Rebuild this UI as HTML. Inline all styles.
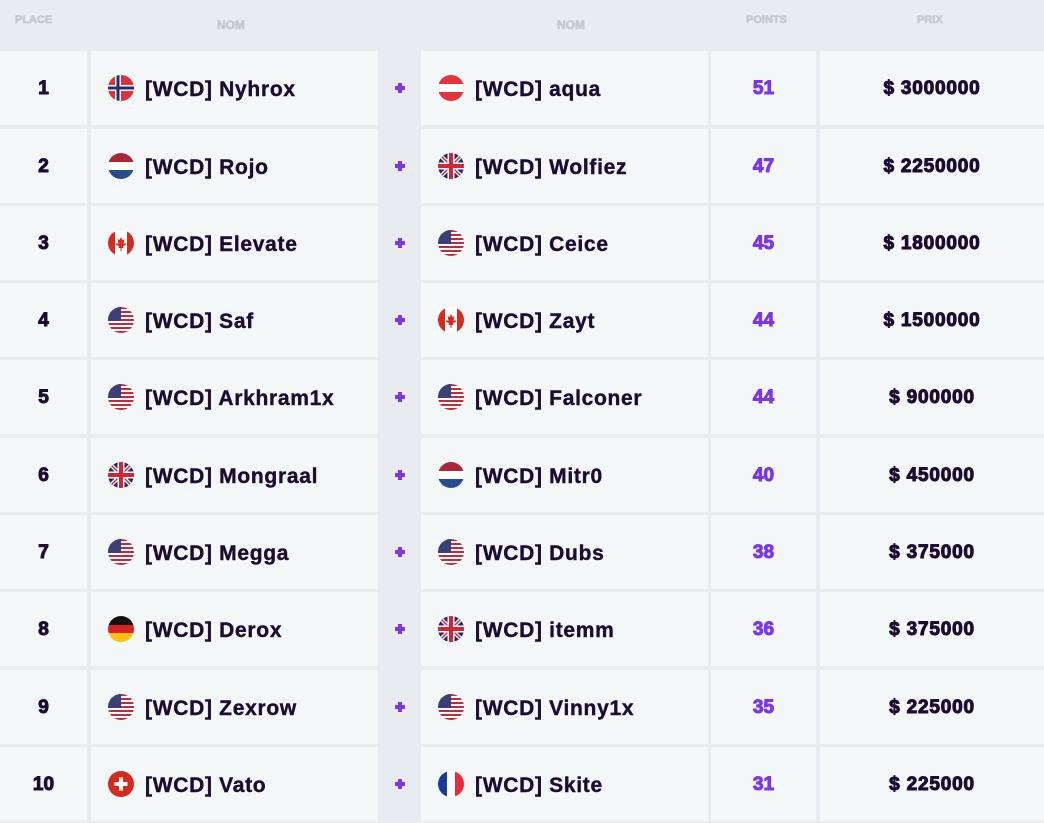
<!DOCTYPE html>
<html><head><meta charset="utf-8"><style>
*{margin:0;padding:0;box-sizing:border-box}
body{width:1044px;height:823px;background:#e8ecf0;position:relative;overflow:hidden;font-family:"Liberation Sans",sans-serif;color:#1c0b33}
.h{position:absolute;top:14px;font-size:11px;font-weight:700;color:#c4c8cf;-webkit-text-stroke:.6px #c4c8cf}
.r{position:absolute;left:0;width:1044px;height:74px}
.c{position:absolute;top:0;height:74px;background:#f3f7f8;display:flex;align-items:center}
.p{left:0;width:87px;justify-content:center;font-weight:700;font-size:19px;-webkit-text-stroke:1px #1c0b33;padding-top:2px}
.n{width:287px;padding-left:17px;font-weight:700;font-size:21px;letter-spacing:.7px;-webkit-text-stroke:.4px #1c0b33;padding-top:3px}
.n1{left:91px}.n2{left:421px}
.n svg{width:26px;height:26px;margin-right:11px;flex:none;margin-top:-3px}
.pt{left:711px;width:105px;justify-content:center;color:#7b35f0;font-weight:700;font-size:19px;-webkit-text-stroke:1px #7b35f0;padding-top:2px}
.pr{left:820px;width:224px;justify-content:center;font-weight:700;font-size:19px;letter-spacing:.8px;-webkit-text-stroke:1px #1c0b33;padding-top:2px}
.pl{position:absolute;left:393px;top:30px;width:14px;height:14px}
</style></head><body>
<svg width="0" height="0" style="position:absolute">
<defs>
<clipPath id="cc"><circle cx="13" cy="13" r="13"/></clipPath>
<g id="no" clip-path="url(#cc)"><rect width="26" height="26" fill="#e0303c"/><rect x="7" width="6" height="26" fill="#fff"/><rect y="10" width="26" height="6" fill="#fff"/><rect x="8.5" width="3" height="26" fill="#1e2f6b"/><rect y="11.5" width="26" height="3" fill="#1e2f6b"/></g>
<g id="at" clip-path="url(#cc)"><rect width="26" height="26" fill="#e5333d"/><rect y="9" width="26" height="8" fill="#fff"/></g>
<g id="nl" clip-path="url(#cc)"><rect width="26" height="9" fill="#ad2636"/><rect y="9" width="26" height="8" fill="#fff"/><rect y="17" width="26" height="9" fill="#274c8f"/></g>
<g id="gb" clip-path="url(#cc)"><rect width="26" height="26" fill="#1f2a66"/><path d="M0 0L26 26M26 0L0 26" stroke="#fff" stroke-width="4"/><path d="M0 0L26 26M26 0L0 26" stroke="#d42434" stroke-width="1.5"/><rect x="9.5" width="7" height="26" fill="#fff"/><rect y="9.5" width="26" height="7" fill="#fff"/><rect x="11" width="4" height="26" fill="#d42434"/><rect y="11" width="26" height="4" fill="#d42434"/></g>
<g id="ca" clip-path="url(#cc)"><rect width="26" height="26" fill="#fff"/><rect width="7" height="26" fill="#d52b1e"/><rect x="19" width="7" height="26" fill="#d52b1e"/><path d="M13 7l1.5 3 2-1-1 5 2-1 .5 2-3 1 .5 2h-2v3h-1v-3h-2l.5-2-3-1 .5-2 2 1-1-5 2 1z" fill="#d52b1e"/></g>
<g id="us" clip-path="url(#cc)"><rect width="26" height="26" fill="#fff"/><g fill="#c42a3a"><rect y="0" width="26" height="2"/><rect y="4" width="26" height="2"/><rect y="8" width="26" height="2"/><rect y="12" width="26" height="2"/><rect y="16" width="26" height="2"/><rect y="20" width="26" height="2"/><rect y="24" width="26" height="2"/></g><rect width="13" height="14" fill="#3b3f78"/></g>
<g id="de" clip-path="url(#cc)"><rect width="26" height="9" fill="#111"/><rect y="9" width="26" height="8" fill="#dd1f26"/><rect y="17" width="26" height="9" fill="#fcc10d"/></g>
<g id="ch" clip-path="url(#cc)"><rect width="26" height="26" fill="#d52b1e"/><rect x="11" y="6.5" width="4" height="13" fill="#fff"/><rect x="6.5" y="11" width="13" height="4" fill="#fff"/></g>
<g id="fr" clip-path="url(#cc)"><rect width="9" height="26" fill="#1c3a9c"/><rect x="9" width="8" height="26" fill="#fff"/><rect x="17" width="9" height="26" fill="#ee2a3c"/></g>
<g id="plus"><path d="M5 2h4v3h3v4h-3v3h-4v-3h-3v-4h3z" fill="#7b35f0"/></g>
</defs></svg>
<div class="h" style="left:15px">PLACE</div>
<div class="h" style="left:217px;top:18px;font-size:12px">NOM</div>
<div class="h" style="left:557px;top:18px;font-size:12px">NOM</div>
<div class="h" style="left:746px">POINTS</div>
<div class="h" style="left:917px">PRIX</div>

<div class="r" style="top:51px"><div class="c p">1</div><div class="c n n1"><svg><use href="#no"/></svg>[WCD] Nyhrox</div><svg class="pl"><use href="#plus"/></svg><div class="c n n2"><svg><use href="#at"/></svg>[WCD] aqua</div><div class="c pt">51</div><div class="c pr">$ 3000000</div></div>
<div class="r" style="top:129px"><div class="c p">2</div><div class="c n n1"><svg><use href="#nl"/></svg>[WCD] Rojo</div><svg class="pl"><use href="#plus"/></svg><div class="c n n2"><svg><use href="#gb"/></svg>[WCD] Wolfiez</div><div class="c pt">47</div><div class="c pr">$ 2250000</div></div>
<div class="r" style="top:206px"><div class="c p">3</div><div class="c n n1"><svg><use href="#ca"/></svg>[WCD] Elevate</div><svg class="pl"><use href="#plus"/></svg><div class="c n n2"><svg><use href="#us"/></svg>[WCD] Ceice</div><div class="c pt">45</div><div class="c pr">$ 1800000</div></div>
<div class="r" style="top:283px"><div class="c p">4</div><div class="c n n1"><svg><use href="#us"/></svg>[WCD] Saf</div><svg class="pl"><use href="#plus"/></svg><div class="c n n2"><svg><use href="#ca"/></svg>[WCD] Zayt</div><div class="c pt">44</div><div class="c pr">$ 1500000</div></div>
<div class="r" style="top:360px"><div class="c p">5</div><div class="c n n1"><svg><use href="#us"/></svg>[WCD] Arkhram1x</div><svg class="pl"><use href="#plus"/></svg><div class="c n n2"><svg><use href="#us"/></svg>[WCD] Falconer</div><div class="c pt">44</div><div class="c pr">$ 900000</div></div>
<div class="r" style="top:438px"><div class="c p">6</div><div class="c n n1"><svg><use href="#gb"/></svg>[WCD] Mongraal</div><svg class="pl"><use href="#plus"/></svg><div class="c n n2"><svg><use href="#nl"/></svg>[WCD] Mitr0</div><div class="c pt">40</div><div class="c pr">$ 450000</div></div>
<div class="r" style="top:515px"><div class="c p">7</div><div class="c n n1"><svg><use href="#us"/></svg>[WCD] Megga</div><svg class="pl"><use href="#plus"/></svg><div class="c n n2"><svg><use href="#us"/></svg>[WCD] Dubs</div><div class="c pt">38</div><div class="c pr">$ 375000</div></div>
<div class="r" style="top:592px"><div class="c p">8</div><div class="c n n1"><svg><use href="#de"/></svg>[WCD] Derox</div><svg class="pl"><use href="#plus"/></svg><div class="c n n2"><svg><use href="#gb"/></svg>[WCD] itemm</div><div class="c pt">36</div><div class="c pr">$ 375000</div></div>
<div class="r" style="top:670px"><div class="c p">9</div><div class="c n n1"><svg><use href="#us"/></svg>[WCD] Zexrow</div><svg class="pl"><use href="#plus"/></svg><div class="c n n2"><svg><use href="#us"/></svg>[WCD] Vinny1x</div><div class="c pt">35</div><div class="c pr">$ 225000</div></div>
<div class="r" style="top:747px"><div class="c p">10</div><div class="c n n1"><svg><use href="#ch"/></svg>[WCD] Vato</div><svg class="pl"><use href="#plus"/></svg><div class="c n n2"><svg><use href="#fr"/></svg>[WCD] Skite</div><div class="c pt">31</div><div class="c pr">$ 225000</div></div>
</body></html>
